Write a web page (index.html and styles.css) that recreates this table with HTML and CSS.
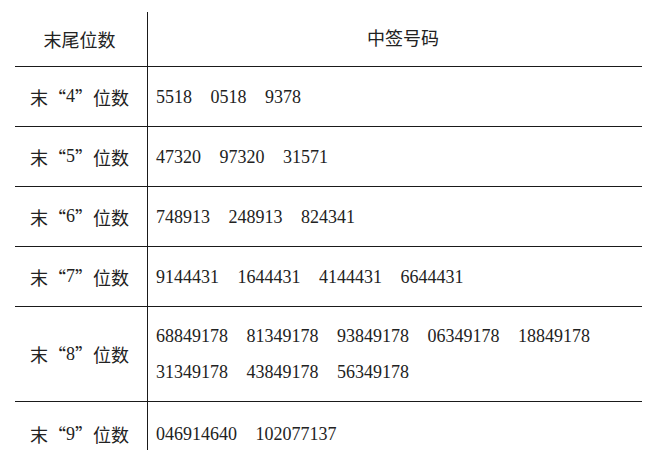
FILE: index.html
```html
<!DOCTYPE html>
<html lang="zh-CN">
<head>
<meta charset="utf-8">
<link rel="stylesheet" href="styles.css">
</head>
<body>
<div class="table">
  <div class="cell left head">末尾位数</div>
  <div class="cell right head head-r">中签号码</div>

  <div class="cell left">末“<span class="d">4</span>”位数</div>
  <div class="cell right"><span>5518</span><span>0518</span><span>9378</span></div>

  <div class="cell left">末“<span class="d">5</span>”位数</div>
  <div class="cell right"><span>47320</span><span>97320</span><span>31571</span></div>

  <div class="cell left">末“<span class="d">6</span>”位数</div>
  <div class="cell right"><span>748913</span><span>248913</span><span>824341</span></div>

  <div class="cell left">末“<span class="d">7</span>”位数</div>
  <div class="cell right"><span>9144431</span><span>1644431</span><span>4144431</span><span>6644431</span></div>

  <div class="cell left tall">末“<span class="d">8</span>”位数</div>
  <div class="cell right tall"><span>68849178</span><span>81349178</span><span>93849178</span><span>06349178</span><span>18849178</span><span>31349178</span><span>43849178</span><span>56349178</span></div>

  <div class="cell left">末“<span class="d">9</span>”位数</div>
  <div class="cell right"><span>046914640</span><span>102077137</span></div>
</div>
</body>
</html>
```

FILE: styles.css
```css
html, body {
  margin: 0;
  padding: 0;
  background: #fff;
}
body {
  color: #222;
  font-size: 18px;
}
.table {
  margin: 12px 0 0 15px;
  width: 627px;
  display: grid;
  grid-template-columns: 133px 494px;
  grid-auto-rows: 60px;
}
.cell {
  border-bottom: 1px solid #1a1a1a;
  display: flex;
  align-items: center;
}
.head {
  height: 55px;
}
.table > .head {
  grid-row: 1;
}
.table {
  grid-template-rows: 55px 60px 60px 60px 60px 95px 64px;
}
.left {
  border-right: 1px solid #1a1a1a;
  justify-content: center;
  padding-right: 3px;
  font-family: "Noto Sans CJK SC", sans-serif;
  font-weight: 400;
  letter-spacing: 0;
}
.head.left {
  font-family: "Noto Sans CJK SC", serif;
}
.head-r {
  justify-content: center;
  padding-left: 15px;
  font-family: "Noto Sans CJK SC", sans-serif;
}
.d {
  font-family: "Liberation Serif", serif;
}
.right {
  padding-left: 8px;
  font-family: "Liberation Serif", serif;
  flex-wrap: wrap;
  column-gap: 18.5px;
  line-height: 36px;
  align-content: center;
}
.head-r {
  padding-left: 15px;
}
.cell.head {
  height: auto;
}
.table > .cell:nth-last-child(-n+2) {
  border-bottom: none;
}
```
